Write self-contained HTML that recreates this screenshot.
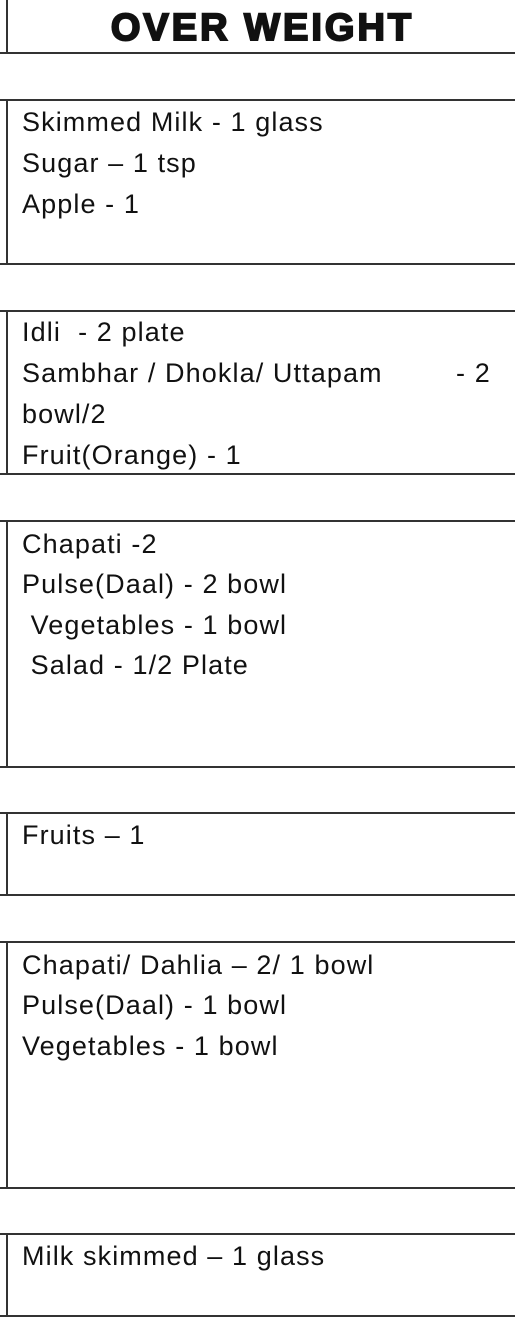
<!DOCTYPE html>
<html><head><style>
html,body{margin:0;padding:0;background:#fff;}
body{width:515px;height:1320px;position:relative;overflow:hidden;font-family:"Liberation Sans",sans-serif;color:#111;}
.h{position:absolute;left:0;width:515px;height:2px;background:#333;}
.v{position:absolute;left:6px;width:2px;background:#333;}
.t{position:absolute;left:22px;font-size:27px;line-height:30px;white-space:pre;letter-spacing:1.1px;}
.title{position:absolute;left:0;width:525px;text-align:center;top:6px;font-size:38px;font-weight:900;line-height:44px;letter-spacing:3px;-webkit-text-stroke:2px #111;font-family:"Liberation Sans",sans-serif;}
</style></head><body>
<div class="v" style="top:0;height:53px"></div>
<div class="title">OVER WEIGHT</div>
<div class="h" style="top:52px"></div>

<div class="h" style="top:99px"></div>
<div class="v" style="top:99px;height:165px"></div>
<div class="h" style="top:263px"></div>
<div class="t" style="top:107px">Skimmed Milk - 1 glass</div>
<div class="t" style="top:148px">Sugar – 1 tsp</div>
<div class="t" style="top:189px">Apple - 1</div>

<div class="h" style="top:310px"></div>
<div class="v" style="top:310px;height:164px"></div>
<div class="h" style="top:473px"></div>
<div class="t" style="top:317px">Idli  - 2 plate</div>
<div class="t" style="top:358px">Sambhar / Dhokla/ Uttapam</div>
<div class="t" style="top:358px;left:456px">- 2</div>
<div class="t" style="top:399px">bowl/2</div>
<div class="t" style="top:440px">Fruit(Orange) - 1</div>

<div class="h" style="top:520px"></div>
<div class="v" style="top:520px;height:247px"></div>
<div class="h" style="top:766px"></div>
<div class="t" style="top:529px">Chapati -2</div>
<div class="t" style="top:569px">Pulse(Daal) - 2 bowl</div>
<div class="t" style="top:610px"> Vegetables - 1 bowl</div>
<div class="t" style="top:650px"> Salad - 1/2 Plate</div>

<div class="h" style="top:812px"></div>
<div class="v" style="top:812px;height:83px"></div>
<div class="h" style="top:894px"></div>
<div class="t" style="top:820px">Fruits – 1</div>

<div class="h" style="top:941px"></div>
<div class="v" style="top:941px;height:247px"></div>
<div class="h" style="top:1187px"></div>
<div class="t" style="top:950px">Chapati/ Dahlia – 2/ 1 bowl</div>
<div class="t" style="top:990px">Pulse(Daal) - 1 bowl</div>
<div class="t" style="top:1031px">Vegetables - 1 bowl</div>

<div class="h" style="top:1233px"></div>
<div class="v" style="top:1233px;height:83px"></div>
<div class="h" style="top:1315px"></div>
<div class="t" style="top:1241px">Milk skimmed – 1 glass</div>
</body></html>
